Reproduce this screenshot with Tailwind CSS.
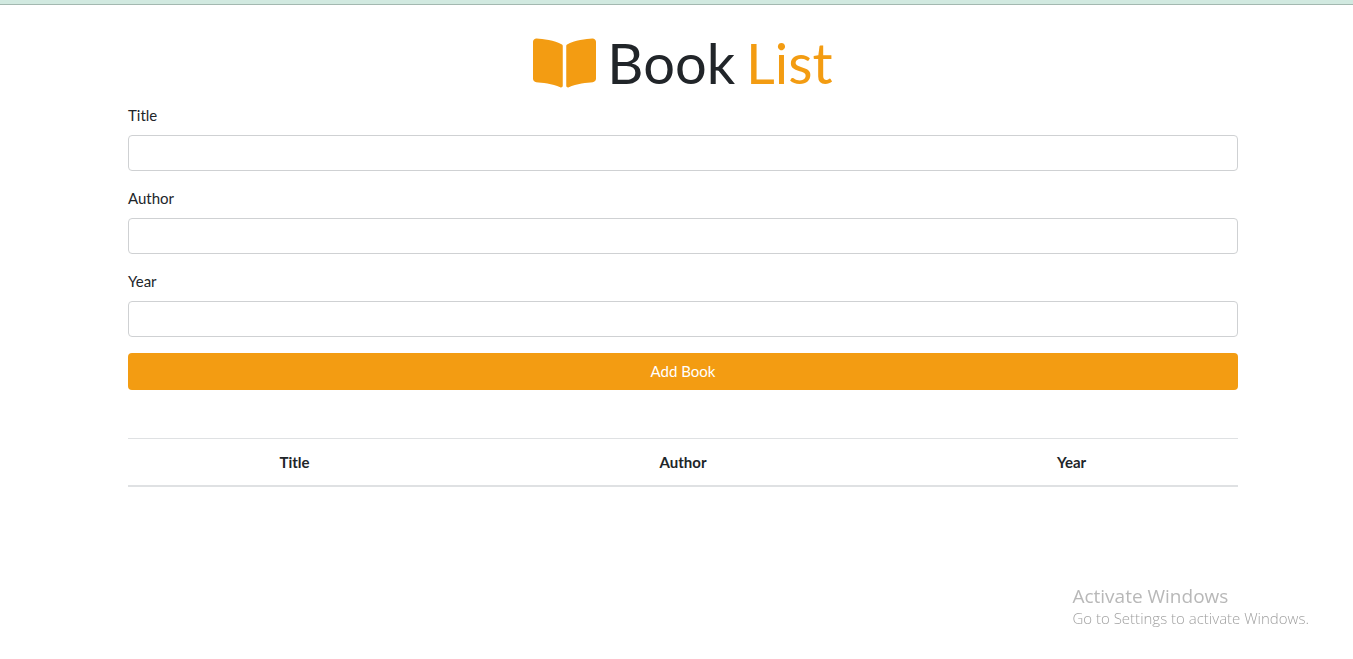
<!DOCTYPE html>
<html lang="en">
<head>
<meta charset="utf-8">
<meta name="viewport" content="width=device-width, initial-scale=1">
<title>Book List</title>
<script src="https://cdn.jsdelivr.net/npm/@tailwindcss/browser@4"></script>
</head>
<body class="min-h-screen bg-white font-['Lato',sans-serif] text-[15px] leading-[23px] text-[#212529]">
  <div class="h-[5px] border-b border-[#a3b8b0] bg-[#d1e9e0]"></div>
  <div class="pl-[13px]">
    <main class="mx-auto max-w-[1140px] px-[15px] pt-6">
      <h1 class="mb-2 flex items-center justify-center gap-[11px] text-[56px] leading-[67px]">
        <svg class="h-14 w-[63px] text-[#f39c12]" viewBox="0 0 576 512" fill="currentColor" aria-hidden="true"><path d="M542.22 32.05c-54.8 3.11-163.72 14.43-230.96 55.59-4.64 2.84-7.27 7.89-7.27 13.17v363.87c0 11.55 12.63 18.85 23.28 13.49 69.18-34.82 169.23-44.32 218.7-46.92 16.89-.89 30.02-14.43 30.02-30.66V62.75c.01-17.71-15.35-31.74-33.77-30.7zM264.73 87.64C197.5 46.48 88.58 35.17 33.78 32.05 15.36 31.01 0 45.04 0 62.75V400.6c0 16.24 13.13 29.78 30.02 30.66 49.49 2.6 149.59 12.11 218.77 46.95 10.62 5.35 23.21-1.94 23.21-13.46V100.63c0-5.29-2.62-10.14-7.27-12.99z"/></svg>
        <span>Book</span>
        <span class="text-[#f39c12]">List</span>
      </h1>
      <form class="flex flex-col gap-4">
        <div class="flex flex-col gap-2">
          <label for="title">Title</label>
          <input id="title" type="text" class="h-9 w-full rounded border border-[#cfd1d3] bg-white px-3">
        </div>
        <div class="flex flex-col gap-2">
          <label for="author">Author</label>
          <input id="author" type="text" class="h-9 w-full rounded border border-[#cfd1d3] bg-white px-3">
        </div>
        <div class="flex flex-col gap-2">
          <label for="year">Year</label>
          <input id="year" type="text" class="h-9 w-full rounded border border-[#cfd1d3] bg-white px-3">
        </div>
        <button type="button" class="w-full rounded bg-[#f39c12] py-[7px] text-white">Add Book</button>
      </form>
      <table class="mt-12 w-full table-fixed border-collapse">
        <thead>
          <tr class="border-t border-b-2 border-[#dfe1e3]">
            <th scope="col" class="w-[30%] px-3 pt-3 pb-[11px] font-bold">Title</th>
            <th scope="col" class="w-[40%] px-3 pt-3 pb-[11px] font-bold">Author</th>
            <th scope="col" class="w-[30%] px-3 pt-3 pb-[11px] font-bold">Year</th>
          </tr>
        </thead>
        <tbody></tbody>
      </table>
    </main>
  </div>
  <aside class="pointer-events-none fixed right-11 bottom-[31px] font-['Open_Sans',sans-serif]">
    <p class="text-[19px] leading-6 text-[#b8b8b8]">Activate Windows</p>
    <p class="text-[15px] leading-5 font-light text-[#a0a0a0]">Go to Settings to activate Windows.</p>
  </aside>
</body>
</html>
